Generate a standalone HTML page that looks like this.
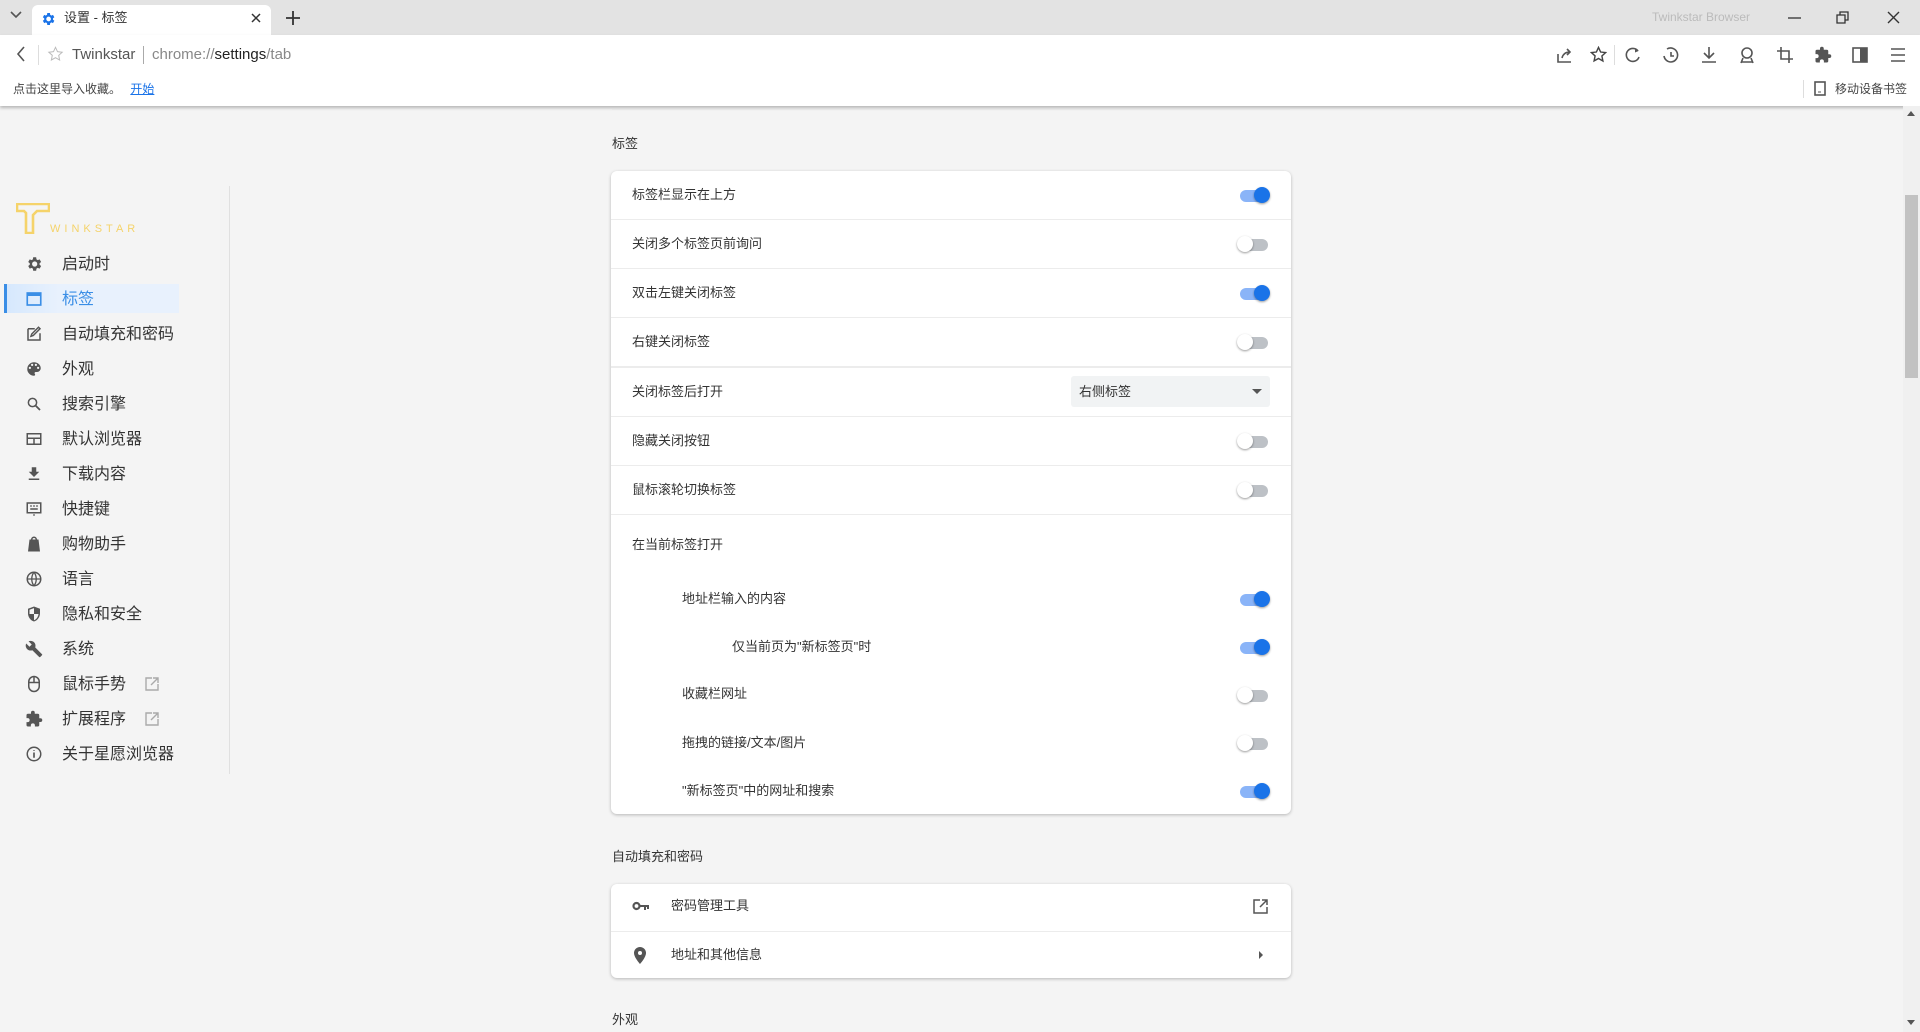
<!DOCTYPE html>
<html><head><meta charset="utf-8">
<style>
*{box-sizing:border-box;margin:0;padding:0}
body{width:1920px;height:1032px;overflow:hidden;background:#f4f4f4;font-family:"Liberation Sans","Noto Sans CJK SC",sans-serif;color:#333;position:relative}
.abs{position:absolute}
#tabbar{left:0;top:0;width:1920px;height:35px;background:#e3e3e3}
#tab{left:32px;top:5px;width:239px;height:30px;background:#fff;border-radius:6px 6px 0 0}
#toolbar{left:0;top:35px;width:1920px;height:71px;background:#fff;box-shadow:0 2px 3px rgba(0,0,0,.25)}
.t{white-space:nowrap;line-height:1.15}
.ico{stroke:#555;fill:none;stroke-width:1.6}
.side{left:62px;font-size:16px;color:#333}
.sico{left:25px;width:18px;height:18px}
.card{background:#fff;border-radius:6px;box-shadow:0 1px 3px rgba(0,0,0,.25)}
.row{position:absolute;left:0;width:680px;border-top:1px solid #ececec}
.lbl{font-size:13px;color:#333}
.tg{position:absolute;width:34px;height:18px}
.tg .tr{position:absolute;left:3px;top:4px;width:28px;height:12px;border-radius:6px;background:#bdc1c6}
.tg .kn{position:absolute;left:0;top:1px;width:16px;height:16px;border-radius:50%;background:#fff;box-shadow:0 1px 2px rgba(0,0,0,.4)}
.tg.on .tr{background:#8ab4f8}
.tg.on .kn{left:17px;background:#1a73e8}
.sec{font-size:13px;color:#333;left:612px}
</style></head><body>
<div id="tabbar" class="abs"></div>
<svg class="abs" style="left:9px;top:10px" width="14" height="10"><path d="M2 2l5 5 5-5" class="ico" stroke-width="1.8"/></svg>
<div id="tab" class="abs"></div>
<svg class="abs" style="left:40px;top:11px" width="16" height="16" viewBox="0 0 24 24"><path fill="#1a73e8" d="M19.4 13a7.5 7.5 0 000-2l2.1-1.6-2-3.5-2.5 1a7 7 0 00-1.7-1L14.9 3h-4l-.4 2.9a7 7 0 00-1.7 1l-2.5-1-2 3.5L6.4 11a7.5 7.5 0 000 2l-2.1 1.6 2 3.5 2.5-1a7 7 0 001.7 1l.4 2.9h4l.4-2.9a7 7 0 001.7-1l2.5 1 2-3.5zM12.9 15.5a3.5 3.5 0 110-7 3.5 3.5 0 010 7z"/></svg>
<div class="abs t" style="left:64px;top:11px;font-size:13px;color:#333">设置 - 标签</div>
<svg class="abs" style="left:251px;top:13px" width="10" height="10"><path d="M1 1l8 8M9 1l-8 8" stroke="#333" stroke-width="1.5"/></svg>
<svg class="abs" style="left:286px;top:11px" width="14" height="14"><path d="M7 0v14M0 7h14" stroke="#333" stroke-width="1.8"/></svg>
<div class="abs t" style="left:1652px;top:11px;font-size:12px;color:#bbb">Twinkstar Browser</div>
<svg class="abs" style="left:1788px;top:17px" width="13" height="2"><path d="M0 1h13" stroke="#333" stroke-width="1.3"/></svg>
<svg class="abs" style="left:1836px;top:11px" width="13" height="13"><path d="M1 4h8v8H1zM4 4V1h8v8H9" stroke="#333" stroke-width="1.3" fill="none"/></svg>
<svg class="abs" style="left:1887px;top:11px" width="13" height="13"><path d="M1 1l11 11M12 1L1 12" stroke="#333" stroke-width="1.4"/></svg>

<div id="toolbar" class="abs"></div>
<svg class="abs" style="left:15px;top:46px" width="12" height="16"><path d="M9 1L3 8l6 7" class="ico" stroke-width="2"/></svg>
<div class="abs" style="left:38px;top:45px;width:1px;height:20px;background:#ddd"></div>
<svg class="abs" style="left:47px;top:46px" width="17" height="16" viewBox="0 0 24 24"><path d="M12 2l3 6.5 7 .8-5.2 4.8 1.4 7L12 17.6 5.8 21l1.4-7L2 9.3l7-.8z" stroke="#bbb" fill="none" stroke-width="1.5"/></svg>
<div class="abs t" style="left:72px;top:46px;font-size:15px;color:#555">Twinkstar</div>
<div class="abs" style="left:143px;top:46px;width:1px;height:18px;background:#aaa"></div>
<div class="abs t" style="left:152px;top:46px;font-size:15px;color:#888">chrome://<span style="color:#222">settings</span>/tab</div>
<div class="abs t" style="left:13px;top:83px;font-size:12px;color:#444">点击这里导入收藏。 <span style="color:#1a73e8;text-decoration:underline;margin-left:6px">开始</span></div>
<div class="abs" style="left:1803px;top:80px;width:1px;height:18px;background:#ddd"></div>
<svg class="abs" style="left:1814px;top:81px" width="12" height="15"><rect x="1" y="1" width="10" height="13" class="ico" stroke-width="1.3"/><path d="M4 11h3" stroke="#555"/></svg>
<div class="abs t" style="left:1835px;top:83px;font-size:12px;color:#444">移动设备书签</div>
<svg class="abs" style="left:1556px;top:46px" width="18" height="18" viewBox="0 0 18 18"><path d="M2 8v8h13M6 12c1-4 4-6 8-6M11 3l3 3-3 3" class="ico" stroke-width="1.4"/></svg>
<svg class="abs" style="left:1590px;top:46px" width="17" height="17" viewBox="0 0 24 24"><path d="M12 2l3 6.5 7 .8-5.2 4.8 1.4 7L12 17.6 5.8 21l1.4-7L2 9.3l7-.8z" stroke="#444" fill="none" stroke-width="2"/></svg>
<div class="abs" style="left:1614px;top:45px;width:1px;height:20px;background:#ddd"></div>
<svg class="abs" style="left:1624px;top:46px" width="18" height="18" viewBox="0 0 18 18"><path d="M14 5A6.5 6.5 0 1015 11" class="ico" stroke-width="1.6"/><path d="M11 2l3.5 3L11 6.5" fill="#555"/></svg>
<svg class="abs" style="left:1662px;top:46px" width="18" height="18" viewBox="0 0 18 18"><path d="M5 3a7 7 0 114 13 7 7 0 01-7-6M9 6v4h3" class="ico" stroke-width="1.7"/></svg>
<svg class="abs" style="left:1700px;top:46px" width="18" height="18" viewBox="0 0 18 18"><path d="M9 1v11M4 7l5 5 5-5M2 16h14" class="ico" stroke-width="1.6"/></svg>
<svg class="abs" style="left:1738px;top:46px" width="18" height="18" viewBox="0 0 18 18"><circle cx="9" cy="7" r="5" class="ico" stroke-width="1.6"/><path d="M3 17l2-5M15 17l-2-5M3 16h12" class="ico" stroke-width="1.6"/></svg>
<svg class="abs" style="left:1776px;top:46px" width="18" height="18" viewBox="0 0 18 18"><path d="M5 1v12h12M1 5h12v12" class="ico" stroke-width="1.8"/></svg>
<svg class="abs" style="left:1814px;top:46px" width="18" height="18" viewBox="0 0 24 24"><path fill="#555" d="M20.5 11H19V7a2 2 0 00-2-2h-4V3.5a2.5 2.5 0 00-5 0V5H4a2 2 0 00-2 2v3.8h1.5a2.7 2.7 0 010 5.4H2V20a2 2 0 002 2h3.8v-1.5a2.7 2.7 0 015.4 0V22H17a2 2 0 002-2v-4h1.5a2.5 2.5 0 000-5z"/></svg>
<svg class="abs" style="left:1852px;top:47px" width="16" height="16"><rect x="1" y="1" width="14" height="14" class="ico" stroke-width="1.8"/><rect x="8" y="1" width="7" height="14" fill="#555"/></svg>
<svg class="abs" style="left:1890px;top:47px" width="16" height="16"><path d="M1 2h14M1 8h14M1 14h14" class="ico" stroke-width="1.4"/></svg>

<svg class="abs" style="left:16px;top:203px" width="34" height="31" viewBox="0 0 34 31"><path d="M1 1h32v7H21l-4 4v18h-7V10l-2-2H1z" fill="none" stroke="#f5d36a" stroke-width="2.6"/></svg>
<div class="abs t" style="left:50px;top:223px;font-size:11px;letter-spacing:4px;color:#f5d36a">WINKSTAR</div>
<div class="abs" style="left:229px;top:186px;width:1px;height:588px;background:#e0e0e0"></div>
<div class="abs" style="left:4px;top:284px;width:175px;height:29px;background:linear-gradient(90deg,#d6e8fd,#e8f1fd 30%);border-left:3px solid #3a8ee6"></div>

<svg class="abs sico" style="top:255px" viewBox="0 0 24 24"><path fill="#555" d="M19.4 13a7.5 7.5 0 000-2l2.1-1.6-2-3.5-2.5 1a7 7 0 00-1.7-1L14.9 3h-4l-.4 2.9a7 7 0 00-1.7 1l-2.5-1-2 3.5L6.4 11a7.5 7.5 0 000 2l-2.1 1.6 2 3.5 2.5-1a7 7 0 001.7 1l.4 2.9h4l.4-2.9a7 7 0 001.7-1l2.5 1 2-3.5zM12.9 15.5a3.5 3.5 0 110-7 3.5 3.5 0 010 7z"/></svg>
<div class="abs side t" style="top:256px">启动时</div>
<svg class="abs sico" style="top:290px" viewBox="0 0 24 24"><rect x="3" y="4" width="18" height="16" fill="none" stroke="#3a8ee6" stroke-width="2.2"/><rect x="3" y="4" width="18" height="4" fill="#3a8ee6"/></svg>
<div class="abs side t" style="top:291px;color:#3a8ee6">标签</div>
<svg class="abs sico" style="top:325px" viewBox="0 0 24 24"><path d="M4 5h9M4 5v15h16v-9M8 15l3-1 9-9-2-2-9 9z" fill="none" stroke="#555" stroke-width="2"/></svg>
<div class="abs side t" style="top:326px">自动填充和密码</div>
<svg class="abs sico" style="top:360px" viewBox="0 0 24 24"><path fill="#555" d="M12 3a9 9 0 000 18c1 0 1.5-.7 1.5-1.5 0-.4-.2-.7-.4-1-.2-.3-.4-.6-.4-1 0-.8.7-1.5 1.5-1.5H16a5 5 0 005-5c0-4.4-4-8-9-8zM6.5 12a1.5 1.5 0 110-3 1.5 1.5 0 010 3zm3-4a1.5 1.5 0 110-3 1.5 1.5 0 010 3zm5 0a1.5 1.5 0 110-3 1.5 1.5 0 010 3zm3 4a1.5 1.5 0 110-3 1.5 1.5 0 010 3z"/></svg>
<div class="abs side t" style="top:361px">外观</div>
<svg class="abs sico" style="top:395px" viewBox="0 0 24 24"><circle cx="10" cy="10" r="5.5" fill="none" stroke="#555" stroke-width="2"/><path d="M14 14l6 6" stroke="#555" stroke-width="2.4"/></svg>
<div class="abs side t" style="top:396px">搜索引擎</div>
<svg class="abs sico" style="top:430px" viewBox="0 0 24 24"><rect x="3" y="5" width="18" height="14" fill="none" stroke="#555" stroke-width="2"/><path d="M3 11h18M12 11v8" stroke="#555" stroke-width="2"/></svg>
<div class="abs side t" style="top:431px">默认浏览器</div>
<svg class="abs sico" style="top:465px" viewBox="0 0 24 24"><path fill="#555" d="M19 9h-4V3H9v6H5l7 7zM5 18v2h14v-2z"/></svg>
<div class="abs side t" style="top:466px">下载内容</div>
<svg class="abs sico" style="top:500px" viewBox="0 0 24 24"><rect x="3" y="4" width="18" height="13" fill="none" stroke="#555" stroke-width="2"/><path d="M7 8h2M11 8h2M15 8h2M7 12h10M11 20h2" stroke="#555" stroke-width="2"/></svg>
<div class="abs side t" style="top:501px">快捷键</div>
<svg class="abs sico" style="top:535px" viewBox="0 0 24 24"><path fill="#555" d="M18 6h-2a4 4 0 00-8 0H6L4 22h16zM10 6a2 2 0 014 0z"/></svg>
<div class="abs side t" style="top:536px">购物助手</div>
<svg class="abs sico" style="top:570px" viewBox="0 0 24 24"><circle cx="12" cy="12" r="9" fill="none" stroke="#555" stroke-width="2"/><path d="M3 12h18M12 3c-4 5-4 13 0 18M12 3c4 5 4 13 0 18" fill="none" stroke="#555" stroke-width="1.8"/></svg>
<div class="abs side t" style="top:571px">语言</div>
<svg class="abs sico" style="top:605px" viewBox="0 0 24 24"><path fill="#555" d="M12 2L4 5v6c0 5 3.4 9.7 8 11 4.6-1.3 8-6 8-11V5zm0 10h6c-.5 4-3 7.4-6 8.3zm0 0H6V6.3l6-2.2z"/></svg>
<div class="abs side t" style="top:606px">隐私和安全</div>
<svg class="abs sico" style="top:640px" viewBox="0 0 24 24"><path fill="#555" d="M22.7 19l-9.1-9.1c.9-2.3.4-5-1.5-6.9-2-2-5-2.4-7.4-1.3L9 6 6 9 1.6 4.7C.4 7.1.9 10.1 2.9 12.1c1.9 1.9 4.6 2.4 6.9 1.5l9.1 9.1c.4.4 1 .4 1.4 0l2.3-2.3c.5-.4.5-1.1.1-1.4z"/></svg>
<div class="abs side t" style="top:641px">系统</div>
<svg class="abs sico" style="top:675px" viewBox="0 0 24 24"><rect x="5" y="2" width="14" height="20" rx="7" fill="none" stroke="#555" stroke-width="2"/><path d="M5 10h14M12 2v8" stroke="#555" stroke-width="2"/></svg>
<div class="abs side t" style="top:676px">鼠标手势</div>
<svg class="abs" style="left:145px;top:677px" width="14" height="14"><path d="M7 1H1v12h12V7M8 1h5v5M13 1L6 8" fill="none" stroke="#aaa" stroke-width="1.4"/></svg>
<svg class="abs sico" style="top:710px" viewBox="0 0 24 24"><path fill="#555" d="M20.5 11H19V7a2 2 0 00-2-2h-4V3.5a2.5 2.5 0 00-5 0V5H4a2 2 0 00-2 2v3.8h1.5a2.7 2.7 0 010 5.4H2V20a2 2 0 002 2h3.8v-1.5a2.7 2.7 0 015.4 0V22H17a2 2 0 002-2v-4h1.5a2.5 2.5 0 000-5z"/></svg>
<div class="abs side t" style="top:711px">扩展程序</div>
<svg class="abs" style="left:145px;top:712px" width="14" height="14"><path d="M7 1H1v12h12V7M8 1h5v5M13 1L6 8" fill="none" stroke="#aaa" stroke-width="1.4"/></svg>
<svg class="abs sico" style="top:745px" viewBox="0 0 24 24"><circle cx="12" cy="12" r="9" fill="none" stroke="#555" stroke-width="2"/><path d="M12 10v7M12 7v1" stroke="#555" stroke-width="2.2"/></svg>
<div class="abs side t" style="top:746px">关于星愿浏览器</div>

<div class="abs" style="left:612px;top:106px;width:678px;height:4px;border-bottom:1px solid #e6e6e6"></div>
<div class="abs sec t" style="top:137px">标签</div>
<div class="abs card" style="left:611px;top:171px;width:680px;height:643px">
  <div class="row" style="top:0;height:48px;border-top:none"></div>
  <div class="row" style="top:48px"></div>
  <div class="row" style="top:97px"></div>
  <div class="row" style="top:146px"></div>
  <div class="row" style="top:195px;border-top:2px solid #ececec"></div>
  <div class="row" style="top:245px"></div>
  <div class="row" style="top:294px"></div>
  <div class="row" style="top:343px"></div>
</div>
<div class="abs lbl t" style="left:632px;top:188px">标签栏显示在上方</div>
<div class="abs lbl t" style="left:632px;top:237px">关闭多个标签页前询问</div>
<div class="abs lbl t" style="left:632px;top:286px">双击左键关闭标签</div>
<div class="abs lbl t" style="left:632px;top:335px">右键关闭标签</div>
<div class="abs lbl t" style="left:632px;top:385px">关闭标签后打开</div>
<div class="abs lbl t" style="left:632px;top:434px">隐藏关闭按钮</div>
<div class="abs lbl t" style="left:632px;top:483px">鼠标滚轮切换标签</div>
<div class="abs lbl t" style="left:632px;top:538px">在当前标签打开</div>
<div class="abs lbl t" style="left:682px;top:592px">地址栏输入的内容</div>
<div class="abs lbl t" style="left:732px;top:640px">仅当前页为"新标签页"时</div>
<div class="abs lbl t" style="left:682px;top:687px">收藏栏网址</div>
<div class="abs lbl t" style="left:682px;top:736px">拖拽的链接/文本/图片</div>
<div class="abs lbl t" style="left:682px;top:784px">"新标签页"中的网址和搜索</div>

<div class="tg on" style="left:1237px;top:186px"><div class="tr"></div><div class="kn"></div></div>
<div class="tg" style="left:1237px;top:235px"><div class="tr"></div><div class="kn"></div></div>
<div class="tg on" style="left:1237px;top:284px"><div class="tr"></div><div class="kn"></div></div>
<div class="tg" style="left:1237px;top:333px"><div class="tr"></div><div class="kn"></div></div>
<div class="tg" style="left:1237px;top:432px"><div class="tr"></div><div class="kn"></div></div>
<div class="tg" style="left:1237px;top:481px"><div class="tr"></div><div class="kn"></div></div>
<div class="tg on" style="left:1237px;top:590px"><div class="tr"></div><div class="kn"></div></div>
<div class="tg on" style="left:1237px;top:638px"><div class="tr"></div><div class="kn"></div></div>
<div class="tg" style="left:1237px;top:686px"><div class="tr"></div><div class="kn"></div></div>
<div class="tg" style="left:1237px;top:734px"><div class="tr"></div><div class="kn"></div></div>
<div class="tg on" style="left:1237px;top:782px"><div class="tr"></div><div class="kn"></div></div>

<div class="abs" style="left:1071px;top:376px;width:199px;height:31px;background:#f1f3f4;border-radius:3px"></div>
<div class="abs lbl t" style="left:1079px;top:385px">右侧标签</div>
<svg class="abs" style="left:1252px;top:389px" width="10" height="6"><path d="M0 0h10L5 5z" fill="#555"/></svg>

<div class="abs sec t" style="top:850px">自动填充和密码</div>
<div class="abs card" style="left:611px;top:884px;width:680px;height:94px">
  <div class="row" style="top:47px"></div>
</div>
<svg class="abs" style="left:632px;top:901px" width="18" height="10" viewBox="0 0 18 10"><circle cx="4.5" cy="5" r="3" fill="none" stroke="#555" stroke-width="2.2"/><path d="M7 5h10M13 5v4M16 5v3" stroke="#555" stroke-width="2"/></svg>
<div class="abs lbl t" style="left:671px;top:899px">密码管理工具</div>
<svg class="abs" style="left:1253px;top:899px" width="15" height="15"><path d="M7 1H1v13h13V8M9 1h5v5M14 1L7 8" fill="none" stroke="#555" stroke-width="1.5"/></svg>
<svg class="abs" style="left:634px;top:947px" width="12" height="17" viewBox="0 0 12 17"><path d="M6 0a6 6 0 00-6 6c0 4.5 6 11 6 11s6-6.5 6-11a6 6 0 00-6-6zm0 8a2 2 0 110-4 2 2 0 010 4z" fill="#555"/></svg>
<div class="abs lbl t" style="left:671px;top:948px">地址和其他信息</div>
<svg class="abs" style="left:1259px;top:951px" width="5" height="8"><path d="M0 0l4 4-4 4z" fill="#555"/></svg>
<div class="abs sec t" style="top:1013px">外观</div>

<div class="abs" style="left:1903px;top:106px;width:17px;height:926px;background:#f0f0f0"></div>
<svg class="abs" style="left:1907px;top:111px" width="9" height="6"><path d="M0 5h8L4 0z" fill="#555"/></svg>
<div class="abs" style="left:1905px;top:195px;width:13px;height:183px;background:#c2c2c2"></div>
<svg class="abs" style="left:1907px;top:1020px" width="9" height="6"><path d="M0 0h8L4 5z" fill="#555"/></svg>
</body></html>
